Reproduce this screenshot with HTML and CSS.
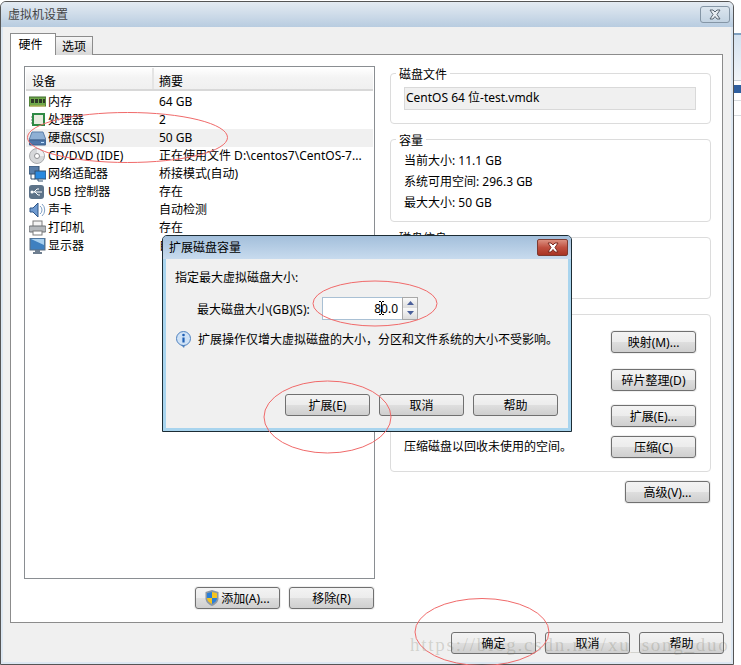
FILE: index.html
```html
<!DOCTYPE html>
<html lang="zh-CN">
<head>
	<meta charset="utf-8">
	<title>虚拟机设置</title>
	<link rel="stylesheet" href="styles.css">
</head>
<body>
	<div class="desk">
		<div class="window">
			<div class="titlebar">
				<span class="title-text">虚拟机设置</span>
				<span class="close-btn">
					<svg width="16" height="11" viewBox="0 0 16 11"><path d="M3 1h3l2 2 2-2h3l-3 4.500 3 4.500h-3l-2-2.500-2 2.500h-3l3-4.500z" fill="#e8edf2" stroke="#5a6672"/></svg>
				</span>
			</div>
			<div class="win-body">
				<div class="tabs">
					<div class="tab tab-on">硬件</div>
					<div class="tab">选项</div>
				</div>
				<div class="panel">
					<div class="left-col">
						<div class="devices">
							<div class="dev-head">
								<div class="dev-h1">设备</div>
								<div class="dev-h2">摘要</div>
							</div>
							<div class="dev-row">
								<span class="dev-name">
									<svg class="dev-icon" viewBox="0 0 17 16"><rect x="0" y="3" width="17" height="9" fill="#6fa84a" stroke="#3f6b2c"/><rect x="2" y="5" width="3" height="4" fill="#2d3a26"/><rect x="6" y="5" width="3" height="4" fill="#2d3a26"/><rect x="10" y="5" width="3" height="4" fill="#2d3a26"/><rect x="14" y="5" width="2" height="4" fill="#2d3a26"/><path d="M1 12h15" stroke="#d8c860"/></svg>
									内存
								</span>
								<span class="dev-val">64 GB</span>
							</div>
							<div class="dev-row">
								<span class="dev-name">
									<svg class="dev-icon" viewBox="0 0 17 16"><rect x="4" y="2" width="11" height="11" fill="#e8ece0" stroke="#2f8a45" stroke-width="2"/><path d="M2 5h1M2 8h1M2 11h1" stroke="#7a7a7a"/></svg>
									处理器
								</span>
								<span class="dev-val">2</span>
							</div>
							<div class="dev-row dev-hover">
								<span class="dev-name">
									<svg class="dev-icon" viewBox="0 0 17 16"><path d="M3 2h11l3 8H0z" fill="#8fb0d4" stroke="#5d7fa8"/><rect x="0" y="10" width="17" height="5" rx="1" fill="#4d76a8" stroke="#3a5d88"/><path d="M12 12.500h3" stroke="#bfe0ff"/></svg>
									硬盘(SCSI)
								</span>
								<span class="dev-val">50 GB</span>
							</div>
							<div class="dev-row">
								<span class="dev-name">
									<svg class="dev-icon" viewBox="0 0 17 16"><circle cx="8" cy="8" r="7.500" fill="#d6d8da" stroke="#a8aaac"/><path d="M8 1a7 7 0 0 1 7 7H8z" fill="#eef0f2"/><circle cx="8" cy="8" r="2.500" fill="#fff" stroke="#8e9092"/></svg>
									CD/DVD (IDE)
								</span>
								<span class="dev-val">正在使用文件 D:\centos7\CentOS-7...</span>
							</div>
							<div class="dev-row">
								<span class="dev-name">
									<svg class="dev-icon" viewBox="0 0 17 16"><rect x="0" y="0" width="10" height="8" fill="#5a7ea8" stroke="#34506e"/><rect x="6" y="5" width="11" height="8" fill="#2a8ae0" stroke="#34506e"/><path d="M2 8v5h4M9 13v2h5" stroke="#34506e" fill="none"/></svg>
									网络适配器
								</span>
								<span class="dev-val">桥接模式(自动)</span>
							</div>
							<div class="dev-row">
								<span class="dev-name">
									<svg class="dev-icon" viewBox="0 0 17 16"><rect x="0" y="1" width="15" height="14" rx="3" fill="#5d7389"/><path d="M2 8h11M5 8l3-3h2M6 8l3 3h2" stroke="#fff" fill="none"/><circle cx="3" cy="8" r="1.500" fill="#fff"/></svg>
									USB 控制器
								</span>
								<span class="dev-val">存在</span>
							</div>
							<div class="dev-row">
								<span class="dev-name">
									<svg class="dev-icon" viewBox="0 0 17 16"><path d="M1 6h3l5-5v14l-5-5H1z" fill="#6f9ad0" stroke="#2f5688"/><path d="M11 4a5 5 0 0 1 0 8M13 2a8 8 0 0 1 0 12" stroke="#7f9fc4" fill="none"/></svg>
									声卡
								</span>
								<span class="dev-val">自动检测</span>
							</div>
							<div class="dev-row">
								<span class="dev-name">
									<svg class="dev-icon" viewBox="0 0 17 16"><rect x="4" y="1" width="9" height="6" fill="#f4f4f4" stroke="#7c7c7c"/><rect x="0" y="6" width="17" height="6" rx="1" fill="#b4b8bc" stroke="#6a6e72"/><rect x="4" y="11" width="9" height="4" fill="#fff" stroke="#7c7c7c"/></svg>
									打印机
								</span>
								<span class="dev-val">存在</span>
							</div>
							<div class="dev-row">
								<span class="dev-name">
									<svg class="dev-icon" viewBox="0 0 17 16"><rect x="1" y="0" width="15" height="12" fill="#3f80c0" stroke="#5f6f80"/><path d="M2 1h13v6z" fill="#a8d0f0"/><path d="M6 13h5M4 15h9" stroke="#6f7f90" stroke-width="2"/></svg>
									显示器
								</span>
								<span class="dev-val">自动检测</span>
							</div>
						</div>
						<div class="left-actions">
							<button class="btn">
								<svg class="shield" viewBox="0 0 14 16"><path d="M7 0l6.500 2v6c0 4-3 6.500-6.500 8C3.500 14.500.5 12 .5 8V2z" fill="#8c98a4"/><path d="M7 2v6H2V3.300z" fill="#2a7fd8"/><path d="M7 2l5 1.300V8H7z" fill="#f4c420"/><path d="M7 8h5c0 2.700-2 4.400-5 6z" fill="#2a7fd8"/><path d="M7 8H2c0 2.700 2 4.400 5 6z" fill="#f4c420"/></svg>
								添加(A)...
							</button>
							<button class="btn">移除(R)</button>
						</div>
					</div>
					<div class="right-col">
						<fieldset class="group group-file">
							<legend>磁盘文件</legend>
							<div class="file-field">CentOS 64 位-test.vmdk</div>
						</fieldset>
						<fieldset class="group group-size">
							<legend>容量</legend>
							<div class="size-line">当前大小: 11.1 GB</div>
							<div class="size-line">系统可用空间: 296.3 GB</div>
							<div class="size-line">最大大小: 50 GB</div>
						</fieldset>
						<fieldset class="group group-info">
							<legend>磁盘信息</legend>
						</fieldset>
						<fieldset class="group group-tools">
							<legend>磁盘实用工具</legend>
							<div class="tool-row">
								<span>将此虚拟磁盘映射到本地卷。</span>
								<button class="btn">映射(M)...</button>
							</div>
							<div class="tool-row">
								<span>整理文件碎片并整合可用空间。</span>
								<button class="btn">碎片整理(D)</button>
							</div>
							<div class="tool-row">
								<span>扩展磁盘容量。</span>
								<button class="btn">扩展(E)...</button>
							</div>
							<div class="tool-row">
								<span>压缩磁盘以回收未使用的空间。</span>
								<button class="btn">压缩(C)</button>
							</div>
						</fieldset>
						<div class="advanced">
							<button class="btn">高级(V)...</button>
						</div>
					</div>
				</div>
				<div class="win-footer">
					<button class="btn">确定</button>
					<button class="btn">取消</button>
					<button class="btn">帮助</button>
				</div>
			</div>
		</div>
		<div class="backdrop">
			<div class="bd-top"></div>
			<div class="bd-bar"></div>
			<div class="bd-pale"></div>
			<div class="bd-sel"></div>
			<div class="bd-line"></div>
			<div class="bd-line bd-line2"></div>
		</div>
	</div>

	<div class="dialog">
		<div class="dlg-title">
			<span>扩展磁盘容量</span>
			<span class="dlg-close">
				<svg width="16" height="11" viewBox="0 0 16 11"><path d="M3 1h3l2 2 2-2h3l-3 4.500 3 4.500h-3l-2-2.500-2 2.500h-3l3-4.500z" fill="#fff" stroke="#7a2a20"/></svg>
			</span>
		</div>
		<div class="dlg-body">
			<div class="dlg-prompt">指定最大虚拟磁盘大小:</div>
			<div class="dlg-field">
				<span>最大磁盘大小(GB)(S):</span>
				<div class="spin-input">
					<div class="spin-text">80.0</div>
					<svg class="ibeam" width="5" height="14" viewBox="0 0 5 14"><path d="M0 .5h2M3 .5h2M2.500 1v12M0 13.500h2M3 13.500h2" stroke="#000" fill="none"/></svg>
				</div>
				<div class="spin-btns">
					<div class="spin-btn"><svg width="7" height="4" viewBox="0 0 7 4"><path d="M3.500 0L7 4H0z" fill="#4a5f9a"/></svg></div>
					<div class="spin-btn"><svg width="7" height="4" viewBox="0 0 7 4"><path d="M0 0h7L3.500 4z" fill="#4a5f9a"/></svg></div>
				</div>
			</div>
			<div class="dlg-note">
				<svg class="info" viewBox="0 0 17 17"><circle cx="8.500" cy="7.500" r="7" fill="#cfe2f6" stroke="#4f82c0"/><path d="M6 14l3 3 1-3z" fill="#4f82c0"/><circle cx="8.500" cy="4" r="1.300" fill="#1f5fb4"/><path d="M8.500 6.500v5" stroke="#1f5fb4" stroke-width="2.200"/></svg>
				<span>扩展操作仅增大虚拟磁盘的大小，分区和文件系统的大小不受影响。</span>
			</div>
			<div class="dlg-actions">
				<button class="btn">扩展(E)</button>
				<button class="btn">取消</button>
				<button class="btn">帮助</button>
			</div>
		</div>
	</div>

	<svg class="marks" width="741" height="665" viewBox="0 0 741 665">
		<ellipse cx="127.500" cy="137.500" rx="100" ry="25"/>
		<ellipse cx="375" cy="303.500" rx="62" ry="22.500"/>
		<ellipse cx="327.500" cy="417" rx="63.500" ry="36"/>
		<ellipse cx="482" cy="632" rx="67" ry="33.500"/>
	</svg>
	<div class="watermark">https://blog.csdn.net/xu_song_duo</div>
</body>
</html>
```
FILE: styles.css
```css
*{
	box-sizing: border-box;
}

html, body{
	margin: 0;
	height: 665px;
	overflow: hidden;
	background: #fff;
}

body{
	position: relative;
	font-family: "Noto Sans", "Noto Sans CJK SC", sans-serif;
	font-size: 12px;
	line-height: 16px;
	color: #000;
}

.desk{
	display: flex;
	height: 665px;
}

/* main window */
.window{
	width: 734px;
	height: 664px;
	margin-top: 1px;
	border: 1px solid #555;
	border-radius: 6px 6px 0 0;
	background: #dce7f2;
	padding: 0 2px 2px;
	display: flex;
	flex-direction: column;
}

.titlebar{
	height: 25px;
	flex: none;
	display: flex;
	align-items: center;
	justify-content: space-between;
	background: linear-gradient(180deg, #e4ebf2 0%, #b8cce0 100%);
	margin: 0 -2px;
	padding-left: 7px;
	padding-right: 3px;
	border-radius: 5px 5px 0 0;
}

.title-text{
	color: #444;
	font-size: 12px;
}

.close-btn{
	width: 30px;
	height: 17px;
	display: flex;
	align-items: center;
	justify-content: center;
	border: 1px solid #8596a6;
	border-radius: 3px;
	background: linear-gradient(180deg, #dbe5ee 0%, #c3d3e2 100%);
}

.win-body{
	flex: 1;
	background: #f0f0f0;
	padding: 7px 8px 0 7px;
	display: flex;
	flex-direction: column;
}

.tabs{
	display: flex;
	align-items: flex-end;
	height: 21px;
	flex: none;
	position: relative;
	z-index: 1;
	margin-bottom: -1px;
}

.tab{
	width: 38px;
	height: 19px;
	border: 1px solid #8c8c8c;
	border-bottom: none;
	background: linear-gradient(180deg, #f6f6f6 0%, #d8d8d8 100%);
	text-align: center;
	line-height: 20px;
}

.tab-on{
	width: 46px;
	height: 22px;
	padding-right: 5px;
	background: #fff;
	margin-right: -1px;
	line-height: 21px;
}

.panel{
	height: 569px;
	flex: none;
	background: #fff;
	border: 1px solid #8c8c8c;
	padding: 11px 11px 0 13px;
	display: flex;
	gap: 15px;
}

.left-col{
	width: 351px;
	flex: none;
}

.devices{
	height: 513px;
	border: 1px solid #8a8e92;
	padding: 1px;
}

.dev-head{
	display: flex;
	height: 23px;
	line-height: 28px;
	background: linear-gradient(180deg, #fff 0%, #f4f4f4 45%, #f0f0f0 100%);
	border-bottom: 2px solid #d8d8d8;
	margin-bottom: 2px;
}

.dev-h1{
	width: 128px;
	padding-left: 6px;
	border-right: 2px solid #e4e4e4;
}

.dev-h2{
	padding-left: 5px;
}

.dev-row{
	display: flex;
	align-items: center;
	height: 18px;
	white-space: nowrap;
}

.dev-hover{
	background: #f0f0f0;
}

.dev-name{
	width: 133px;
	flex: none;
	display: flex;
	align-items: center;
	padding-left: 3px;
}

.dev-icon{
	width: 17px;
	height: 16px;
	flex: none;
	margin-right: 2px;
}

.left-actions{
	display: flex;
	justify-content: flex-end;
	gap: 9px;
	margin-top: 8px;
	padding-right: 1px;
}

.btn{
	width: 85px;
	height: 22px;
	padding: 2px 0 0;
	border: 1px solid #707070;
	border-radius: 3px;
	box-shadow: 0 0 0 1px #f0f0f0;
	background: linear-gradient(180deg, #f3f3f3 0%, #ececec 48%, #dedede 52%, #cfcfcf 100%);
	font-family: inherit;
	font-size: 12px;
	line-height: 18px;
	color: #000;
	display: flex;
	align-items: center;
	justify-content: center;
	flex: none;
}

.shield{
	width: 14px;
	height: 16px;
	margin: -2px 2px 0 0;
}

.right-col{
	width: 321px;
	flex: none;
	margin-top: -1px;
	display: flex;
	flex-direction: column;
	gap: 7px;
}

.group{
	margin: 0;
	padding: 0 14px 0 13px;
	min-width: 0;
	border: 1px solid #dcdcdc;
	border-radius: 4px;
}

.group legend{
	padding: 3px 3px 0;
	margin-left: -8px;
	line-height: 14px;
}

.group-file{
	padding-top: 5px;
	height: 59px;
}

.file-field{
	height: 23px;
	padding-left: 1px;
	border: 1px solid #d9d9d9;
	background: #f0f0f0;
	line-height: 20px;
}

.group-size{
	height: 91px;
	padding-top: 2px;
}

.size-line{
	height: 21px;
	line-height: 21px;
}

.group-info{
	height: 70px;
}

.group-tools{
	height: 166px;
	padding-top: 8px;
}

.tool-row{
	display: flex;
	align-items: center;
	justify-content: space-between;
}

.tool-row:nth-of-type(2){
	margin-top: 16px;
}

.tool-row:nth-of-type(3){
	margin-top: 14px;
}

.tool-row:nth-of-type(4){
	margin-top: 9px;
}

.advanced{
	display: flex;
	justify-content: flex-end;
	margin-top: 2px;
	padding-right: 1px;
}

.win-footer{
	display: flex;
	justify-content: flex-end;
	gap: 9px;
	padding-top: 9px;
	margin-right: -1px;
}

/* whatever window sits behind */
.backdrop{
	flex: 1;
	background: #fff;
}

.bd-top{
	height: 33px;
}

.bd-bar{
	height: 2px;
	background: #7fa0c0;
}

.bd-pale{
	height: 46px;
	background: linear-gradient(180deg, #d4e2f0 0%, #f0f4f8 100%);
	border-bottom: 1px solid #c8d0d8;
}

.bd-sel{
	height: 8px;
	margin-top: 4px;
	background: #2f5f9f;
}

.bd-line{
	height: 1px;
	margin-top: 7px;
	background: #d8dce0;
}

.bd-line2{
	margin-top: 14px;
}

/* resize dialog on top */
.dialog{
	position: absolute;
	left: 162px;
	top: 235px;
	width: 410px;
	height: 197px;
	border: 1px solid #1c2c34;
	border-radius: 5px 5px 0 0;
	background: #a8d4ee;
	padding: 0 3px 3px;
	display: flex;
	flex-direction: column;
}

.dlg-title{
	height: 23px;
	flex: none;
	margin: 0 -3px;
	padding: 0 3px 0 6px;
	display: flex;
	align-items: center;
	justify-content: space-between;
	border-radius: 4px 4px 0 0;
	background: linear-gradient(180deg, #a3bfdb 0%, #c8dbee 100%);
}

.dlg-close{
	width: 31px;
	height: 17px;
	display: flex;
	align-items: center;
	justify-content: center;
	border: 1px solid #7d3a30;
	border-radius: 2px;
	background: linear-gradient(180deg, #dc9080 0%, #c05040 50%, #a83424 100%);
}

.dlg-body{
	flex: 1;
	background: #f0f0f0;
	padding: 11px 9px 0 9px;
	display: flex;
	flex-direction: column;
}

.dlg-field{
	display: flex;
	align-items: center;
	margin-top: 10px;
	padding-left: 22px;
	height: 24px;
}

.dlg-field > span{
	width: 125px;
	flex: none;
	padding-top: 4px;
}

.spin-input{
	position: relative;
	width: 80px;
	height: 23px;
	background: #fff;
	border: 1px solid #a9c0d4;
	border-right: none;
}

.spin-text{
	text-align: right;
	line-height: 21px;
	padding-right: 4px;
}

.ibeam{
	position: absolute;
	left: 56px;
	top: 3px;
}

.spin-btns{
	width: 16px;
	height: 23px;
	border: 1px solid #a8a8a8;
	background: #f0f0f0;
	display: flex;
	flex-direction: column;
}

.spin-btn{
	flex: 1;
	display: flex;
	align-items: center;
	justify-content: center;
	background: linear-gradient(180deg, #fafafa 0%, #dcdcdc 100%);
}

.dlg-note{
	display: flex;
	align-items: center;
	margin-top: 11px;
}

.info{
	width: 17px;
	height: 17px;
	flex: none;
	margin-right: 6px;
}

.dlg-actions{
	display: flex;
	justify-content: flex-end;
	gap: 9px;
	margin-top: 46px;
	padding-right: 1px;
}

/* hand drawn red rings and the site watermark */
.marks{
	position: absolute;
	left: 0;
	top: 0;
	fill: none;
	stroke: #f06a6a;
	stroke-width: 1;
	pointer-events: none;
}

.watermark{
	position: absolute;
	left: 410px;
	top: 634px;
	font-family: "Liberation Serif", serif;
	font-size: 19px;
	line-height: 22px;
	letter-spacing: 1.75px;
	color: rgba(110, 110, 90, 0.24);
	white-space: nowrap;
}
```
